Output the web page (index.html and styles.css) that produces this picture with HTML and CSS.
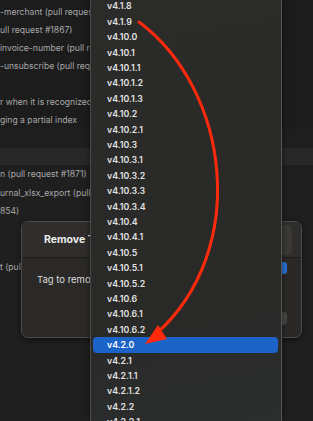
FILE: index.html
```html
<!DOCTYPE html>
<html>
<head>
<meta charset="utf-8">
<link rel="stylesheet" href="styles.css">
</head>
<body>
<div class="page">
  <div class="doc">
    <div class="block block-top">
      <div class="line">-merchant (pull request #1866)</div>
      <div class="line">ull request #1867)</div>
      <div class="line">invoice-number (pull request #1868)</div>
      <div class="line">-unsubscribe (pull request #1869)</div>
      <div class="line"></div>
      <div class="line">r when it is recognized; fixes</div>
      <div class="line">ging a partial index</div>
    </div>
    <div class="band"></div>
    <div class="block block-bottom">
      <div class="line">n (pull request #1871)</div>
      <div class="line">urnal_xlsx_export (pull request #1872)</div>
      <div class="line">854)</div>
      <div class="line"></div>
      <div class="line"></div>
      <div class="line">t (pull request #1873)</div>
    </div>
  </div>

  <div class="sheet">
    <div class="sheet-head">
      <div class="sheet-title">Remove Tag</div>
      <div class="head-box"><span class="head-blue"></span></div>
    </div>
    <div class="sheet-body">
      <div class="body-row">
        <div class="popup"><span class="popup-arrows"></span></div>
      </div>
      <div class="label">Tag to remove:</div>
      <div class="footer">
        <div class="btn"></div>
      </div>
    </div>
  </div>

  <div class="menu">
    <ul class="items">
      <li>v4.1.8</li>
      <li>v4.1.9</li>
      <li>v4.10.0</li>
      <li>v4.10.1</li>
      <li>v4.10.1.1</li>
      <li>v4.10.1.2</li>
      <li>v4.10.1.3</li>
      <li>v4.10.2</li>
      <li>v4.10.2.1</li>
      <li>v4.10.3</li>
      <li>v4.10.3.1</li>
      <li>v4.10.3.2</li>
      <li>v4.10.3.3</li>
      <li>v4.10.3.4</li>
      <li>v4.10.4</li>
      <li>v4.10.4.1</li>
      <li>v4.10.5</li>
      <li>v4.10.5.1</li>
      <li>v4.10.5.2</li>
      <li>v4.10.6</li>
      <li>v4.10.6.1</li>
      <li>v4.10.6.2</li>
      <li class="selected">v4.2.0</li>
      <li>v4.2.1</li>
      <li>v4.2.1.1</li>
      <li>v4.2.1.2</li>
      <li>v4.2.2</li>
      <li>v4.2.2.1</li>
    </ul>
  </div>

  <svg class="arrow" width="313" height="421" viewBox="0 0 313 421">
    <path d="M139 22 C 230 90, 250 250, 156 334" fill="none" stroke="#ff2a0c" stroke-width="3" stroke-linecap="round"/>
    <polygon points="145,344 158,325 167,339" fill="#ff2a0c"/>
  </svg>
</div>
</body>
</html>
```

FILE: styles.css
```css
html, body {
  margin: 0;
  padding: 0;
  width: 313px;
  height: 421px;
  overflow: hidden;
  background: #1e1e1e;
}

.page {
  position: relative;
  width: 313px;
  height: 421px;
  overflow: hidden;
  background: #1e1e1e;
  font-family: "Inter", "Liberation Sans", sans-serif;
}

.doc {
  display: flex;
  flex-direction: column;
}

.block {
  display: flex;
  flex-direction: column;
  color: #a9a9a9;
  font-size: 8.6px;
  white-space: nowrap;
}

.block-top {
  padding-top: 3px;
  height: 126px;
  background: #1c1c1c;
}

.block-top .line {
  height: 18px;
  line-height: 18px;
}

.band {
  margin-top: 19px;
  height: 17px;
  background: #282828;
}

.block-bottom {
  background: #1f1f1f;
  height: 256px;
}

.block-bottom .line {
  height: 18.5px;
  line-height: 18.5px;
}

/* sheet dialog */
.sheet {
  position: absolute;
  left: 21px;
  top: 221px;
  width: 279px;
  height: 115px;
  border: 1px solid #4c4b49;
  border-radius: 7px;
  background: #2a2927;
  box-shadow: 0 2px 6px rgba(0, 0, 0, 0.45);
  display: flex;
  flex-direction: column;
  overflow: hidden;
}

.sheet-head {
  height: 35px;
  background: #2f2e2c;
  border-bottom: 1px solid #1f1e1d;
  display: flex;
  align-items: center;
  justify-content: space-between;
  padding: 0 9px 0 22px;
}

.sheet-title {
  color: #ececec;
  font-weight: 700;
  font-size: 10.5px;
  margin-top: -1px;
}

.head-box {
  position: relative;
  width: 60px;
  height: 30px;
  border-radius: 5px;
  background: #3a3937;
}

.head-blue {
  position: absolute;
  left: 0;
  bottom: 0;
  width: 4px;
  height: 5px;
  background: #2b6fd4;
}

.sheet-body {
  flex: 1;
  display: flex;
  flex-direction: column;
  padding: 4px 14px 12px 15px;
}

.body-row {
  display: flex;
  justify-content: flex-end;
}

.popup {
  width: 150px;
  height: 12px;
  border-radius: 3px;
  background: #3c3b39;
  display: flex;
  justify-content: flex-end;
}

.popup-arrows {
  width: 14px;
  height: 12px;
  border-radius: 3px;
  background: #2a6fd6;
}

.label {
  color: #dcdcdc;
  font-size: 9.5px;
  line-height: 12px;
}

.footer {
  margin-top: auto;
  display: flex;
  justify-content: flex-end;
}

.btn {
  width: 60px;
  height: 13px;
  border-radius: 4px;
  background: #474644;
}

/* dropdown menu */
.menu {
  position: absolute;
  left: 90px;
  top: 0;
  width: 190px;
  height: 421px;
  border-left: 1px solid #4a4a48;
  border-right: 1px solid #555553;
  background: linear-gradient(170deg, #2b2b29 0%, #292927 70%, #2b2d2e 100%);
  box-shadow: 0 0 6px rgba(0, 0, 0, 0.5);
}

.items {
  list-style: none;
  margin: -1.7px 0 0 0;
  padding: 0;
}

.items li {
  height: 15.42px;
  line-height: 15.42px;
  margin: 0 3px 0 2px;
  padding-left: 14px;
  border-radius: 4px;
  color: #e2e2e2;
  font-size: 8.8px;
  font-weight: 600;
  white-space: nowrap;
}

.items li.selected {
  background: #1c63c8;
  color: #ffffff;
}

.arrow {
  position: absolute;
  left: 0;
  top: 0;
}
```
